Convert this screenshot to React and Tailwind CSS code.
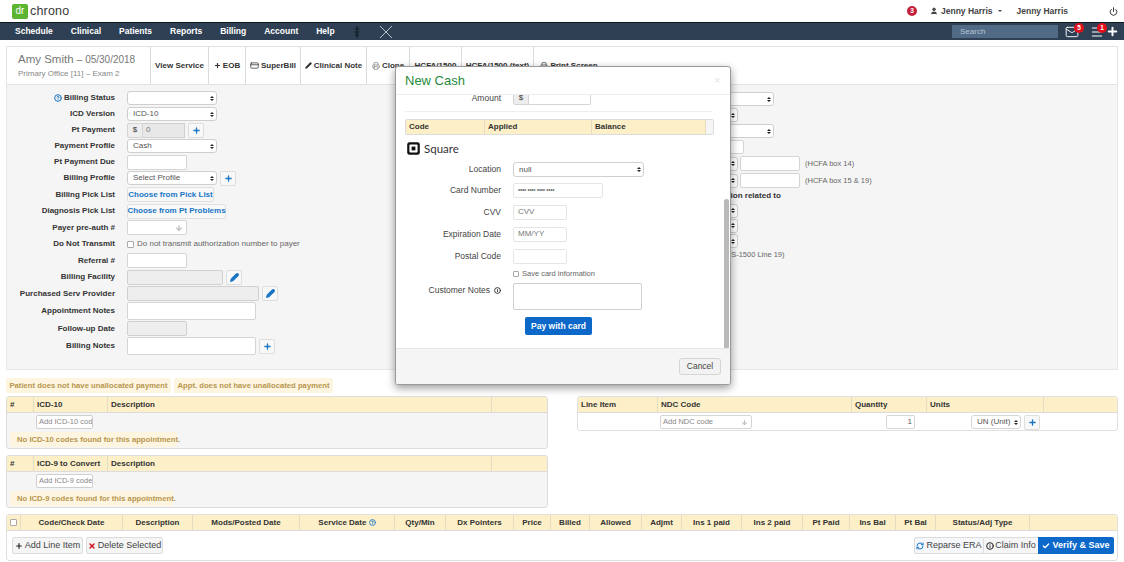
import React from "react";
import { ChevronsUpDown, Plus, Pencil, User, Power, Mail, Menu, CreditCard, Printer, Check, RefreshCw, Info, X, ArrowDown, HelpCircle } from "lucide-react";

const F = { fontFamily: '"Liberation Sans", Arial, sans-serif' };

function Sel({ w, text, h = "h-[14px]" }) {
  return (
    <div className={`${w} ${h} shrink-0 bg-white border border-[#cfcfcf] rounded-[3px] flex items-center justify-between pl-[5px] pr-[2px] text-[8px] text-[#555]`}>
      <span>{text}</span>
      <Arrows />
    </div>
  );
}
function Arrows() {
  return (
    <span className="flex flex-col gap-[1px] items-center shrink-0 w-[5px]">
      <span className="w-0 h-0 border-x-[2px] border-x-transparent border-b-[2.5px] border-b-[#222]" />
      <span className="w-0 h-0 border-x-[2px] border-x-transparent border-t-[2.5px] border-t-[#222]" />
    </span>
  );
}
function Inp({ w, h = "h-[15px]", off, text, cls = "" }) {
  return (
    <div className={`${w} ${h} shrink-0 border rounded-[2px] ${off ? "bg-[#eeeeee] border-[#d0d0d0]" : "bg-white border-[#d5d5d5]"} text-[8px] text-[#777] flex items-center pl-[4px] ${cls}`}>{text}</div>
  );
}
function Blue({ Icon = Plus, fill }) {
  return (
    <div className="w-[16px] h-[15px] shrink-0 ml-[3px] bg-[#f8f8f8] border border-[#dedede] rounded-[2px] flex items-center justify-center text-[#1976c5]">
      <Icon size={9} strokeWidth={3.4} fill={fill ? "currentColor" : "none"} />
    </div>
  );
}
function Row({ label, children, h = "h-[16px]", icon }) {
  return (
    <div className={`flex items-center ${h}`}>
      <div className="w-[108px] pr-0 text-right text-[8px] font-bold text-[#333] whitespace-nowrap flex justify-end items-center gap-[2px] mr-[12px]">
        {icon}
        {label}
      </div>
      {children}
    </div>
  );
}
function Tab({ w, children }) {
  return <div className={`${w} h-full border-r border-[#dcdcdc] flex items-center justify-center gap-[2px] text-[8px] font-bold text-[#333] whitespace-nowrap`}>{children}</div>;
}
function Cell({ w, children, center, noBorder }) {
  return <div className={`${w} h-full flex items-center px-[3px] ${center ? "justify-center" : ""} ${noBorder ? "" : "border-r border-[#e4dcc0]"} text-[8px] font-bold text-[#333] whitespace-nowrap`}>{children}</div>;
}
function Pill({ w, children }) {
  return <div className={`${w} h-[15px] bg-[#fdf5e0] rounded-[2px] flex items-center justify-center text-[7.7px] font-bold text-[#b8954f] whitespace-nowrap`}>{children}</div>;
}
function IcdTable({ title, colW, ph, msg, msgW, h }) {
  return (
    <div className={`w-[542px] ${h} border border-[#dcdcdc] rounded-[3px] bg-[#f5f5f5] overflow-hidden`}>
      <div className="h-[16px] bg-[#fdf0c8] border-b border-[#dcdcdc] flex">
        <Cell w="w-[27px]">#</Cell>
        <Cell w="w-[74px]">{title}</Cell>
        <Cell w="w-[384px]">Description</Cell>
        <Cell w="flex-1" noBorder />
      </div>
      <div className="ml-[29px] mt-[2px] w-[57px] h-[14px] bg-white border border-[#cfcfcf] rounded-[2px] flex items-center pl-[2px] text-[7.5px] text-[#888] whitespace-nowrap overflow-hidden">{ph}</div>
      <div className={`ml-[3px] mt-[3px] ${msgW} h-[15px] bg-[#fdf5e0] rounded-[2px] flex items-center pl-[7px] text-[7.7px] font-bold text-[#b8954f] whitespace-nowrap`}>{msg}</div>
    </div>
  );
}
function MRow({ label, children, h, mt = "mt-0", extra }) {
  return (
    <div className={`flex items-center ${h} ${mt}`}>
      <div className="w-[105px] text-right text-[8.5px] text-[#444] whitespace-nowrap flex justify-end items-center gap-[4px]">{label}{extra}</div>
      <div className="ml-[12px] flex items-center">{children}</div>
    </div>
  );
}

export default function App() {
  return (
    <div style={F} className="relative w-[1124px] h-[562px] bg-white overflow-hidden text-[#333]">
      {/* top bar */}
      <div className="h-[22px] bg-white flex items-center">
        <div className="ml-[12px] w-[16px] h-[15px] bg-[#5cb531] rounded-[2px] flex items-center justify-center text-white text-[10px] leading-none">dr</div>
        <div className="ml-[2px] text-[12.5px] text-[#3a3a3a] tracking-[0.2px]">chrono</div>
        <div className="flex-1" />
        <div className="w-[10px] h-[10px] rounded-full bg-[#c5203a] text-white text-[6.5px] font-bold flex items-center justify-center">3</div>
        <User size={8} fill="#444" className="ml-[13px] text-[#444]" />
        <div className="ml-[3px] text-[8.5px] font-bold text-[#444]">Jenny Harris</div>
        <div className="ml-[5px] w-0 h-0 border-x-[2px] border-x-transparent border-t-[2.5px] border-t-[#444]" />
        <div className="ml-[15px] text-[8.5px] font-bold text-[#444]">Jenny Harris</div>
        <Power size={9} strokeWidth={2.6} className="ml-[41px] mr-[6px] text-[#333]" />
      </div>
      {/* nav */}
      <div className="h-[18px] bg-[#2f4054] border-t border-[#10181f] flex items-center text-white text-[8.5px] font-bold">
        <span className="ml-[15px]">Schedule</span>
        <span className="ml-[18px]">Clinical</span>
        <span className="ml-[18px]">Patients</span>
        <span className="ml-[18px]">Reports</span>
        <span className="ml-[18px]">Billing</span>
        <span className="ml-[18px]">Account</span>
        <span className="ml-[18px]">Help</span>
        <svg width="8" height="14" viewBox="0 0 8 14" className="ml-[18px]" fill="none" stroke="#111c26" strokeWidth="1.2"><path d="M4 1v12M1.5 4h5M1.5 7h5M2 10h4" /></svg>
        <svg width="14" height="14" viewBox="0 0 14 14" className="ml-[18px]" fill="none" stroke="#c9d0d6" strokeWidth="0.9"><path d="M1 1l12 12M13 1L1 13" /></svg>
        <div className="flex-1" />
        <div className="w-[106px] h-[13px] bg-[#516b87] text-[#b9c6d4] font-normal text-[8px] flex items-center pl-[8px]">Search</div>
        <div className="relative ml-[7px] w-[14px] h-[12px]">
          <Mail size={14} strokeWidth={1.6} className="text-white -mt-[1px]" />
          <div className="absolute -top-[3px] left-[9px] w-[10px] h-[10px] rounded-full bg-[#e0101c] text-[6.5px] flex items-center justify-center">5</div>
        </div>
        <div className="relative ml-[11px] w-[12px] h-[12px]">
          <Menu size={14} strokeWidth={1.8} className="text-white -mt-[1px]" />
          <div className="absolute -top-[3px] left-[7px] w-[10px] h-[10px] rounded-full bg-[#e0101c] text-[6.5px] flex items-center justify-center">1</div>
        </div>
        <Plus size={13} strokeWidth={3.6} className="ml-[4px] mr-[5px] text-white" />
      </div>

      {/* header card */}
      <div className="mt-[6px] mx-[6px] h-[39px] bg-white border border-[#e2e2e2] flex">
        <div className="w-[144px] h-full border-r border-[#dcdcdc] pl-[11px] pt-[5px]">
          <div className="text-[11.5px] leading-[14px] text-[#777] whitespace-nowrap">Amy Smith <span className="text-[10px]">– 05/30/2018</span></div>
          <div className="text-[8px] leading-[12px] mt-[1px] text-[#888] whitespace-nowrap">Primary Office [11] – Exam 2</div>
        </div>
        <Tab w="w-[58px]">View Service</Tab>
        <Tab w="w-[37px]"><Plus size={7} strokeWidth={4} />EOB</Tab>
        <Tab w="w-[55px]"><CreditCard size={9} />SuperBill</Tab>
        <Tab w="w-[66px]"><Pencil size={7} fill="#333" />Clinical Note</Tab>
        <Tab w="w-[43px]"><Printer size={8} className="text-[#777]" />Clone</Tab>
        <Tab w="w-[52px]">HCFA/1500</Tab>
        <Tab w="w-[72px]">HCFA/1500 (text)</Tab>
        <div className="w-[70px] h-full flex items-center justify-center gap-[2px] text-[8px] font-bold whitespace-nowrap"><Printer size={8} />Print Screen</div>
      </div>

      {/* billing panel */}
      <div className="mx-[6px] h-[285px] bg-[#f5f5f5] border border-t-0 border-[#e6e6e6] flex">
        <div className="w-[560px] pt-[5px] shrink-0">
          <Row label="Billing Status" icon={<HelpCircle size={8} strokeWidth={3} className="text-[#1976c5]" />}><Sel w="w-[90px]" text="" /></Row>
          <Row label="ICD Version"><Sel w="w-[90px]" text="ICD-10" /></Row>
          <Row label="Pt Payment">
            <div className="w-[16px] h-[15px] bg-[#eee] border border-[#d5d5d5] rounded-l-[2px] text-[8px] flex items-center justify-center">$</div>
            <div className="w-[42px] h-[15px] bg-[#e8e8e8] border border-l-0 border-[#d0d0d0] text-[8px] text-[#777] pl-[3px] flex items-center">0</div>
            <Blue />
          </Row>
          <Row label="Payment Profile"><Sel w="w-[90px]" text="Cash" /></Row>
          <Row label="Pt Payment Due"><Inp w="w-[60px]" /></Row>
          <Row label="Billing Profile"><Sel w="w-[90px]" text="Select Profile" /><Blue /></Row>
          <Row label="Billing Pick List" h="h-[17px]">
            <div className="w-[87px] h-[15px] bg-[#f8f8f8] border border-[#e0e0e0] rounded-[2px] text-[8px] font-bold text-[#1976c5] flex items-center justify-center whitespace-nowrap">Choose from Pick List</div>
          </Row>
          <Row label="Diagnosis Pick List" h="h-[16px]">
            <div className="w-[99px] h-[15px] bg-[#f8f8f8] border border-[#e0e0e0] rounded-[2px] text-[8px] font-bold text-[#1976c5] flex items-center justify-center whitespace-nowrap">Choose from Pt Problems</div>
          </Row>
          <Row label="Payer pre-auth #" h="h-[17px]">
            <div className="w-[60px] h-[15px] bg-white border border-[#d5d5d5] rounded-[2px] flex items-center justify-end pr-[3px] text-[#bbb]"><ArrowDown size={8} strokeWidth={3.5} /></div>
          </Row>
          <Row label="Do Not Transmit">
            <div className="w-[7px] h-[7px] bg-white border border-[#aaa] rounded-[1px] mr-[3px]" />
            <span className="text-[8px] text-[#666] whitespace-nowrap">Do not transmit authorization number to payer</span>
          </Row>
          <Row label="Referral #" h="h-[17px]"><Inp w="w-[60px]" /></Row>
          <Row label="Billing Facility"><Inp w="w-[96px]" off /><Blue Icon={Pencil} fill /></Row>
          <Row label="Purchased Serv Provider" h="h-[17px]"><Inp w="w-[132px]" off /><Blue Icon={Pencil} fill /></Row>
          <Row label="Appointment Notes" h="h-[18px]"><Inp w="w-[129px]" h="h-[18px]" /></Row>
          <Row label="Follow-up Date" h="h-[17px]"><Inp w="w-[60px]" off /></Row>
          <Row label="Billing Notes" h="h-[18px]"><Inp w="w-[129px]" h="h-[18px]" /><Blue /></Row>
        </div>
        <div className="flex-1 pt-[6px] relative">
          <div className="h-[16px] flex items-center"><Sel w="w-[207px]" text="" /></div>
          <div className="h-[16px] flex items-center"><Sel w="w-[171px]" text="" /></div>
          <div className="h-[16px] flex items-center"><Sel w="w-[207px]" text="" /></div>
          <div className="h-[16px] flex items-center"><Inp w="w-[177px]" h="h-[14px]" /></div>
          <div className="h-[17px] flex items-center"><Sel w="w-[171px]" text="" /><Inp w="w-[60px]" cls="ml-[2px]" /><span className="ml-[5px] text-[7.5px] text-[#666] whitespace-nowrap">(HCFA box 14)</span></div>
          <div className="h-[17px] flex items-center"><Sel w="w-[171px]" text="" /><Inp w="w-[60px]" cls="ml-[2px]" /><span className="ml-[5px] text-[7.5px] text-[#666] whitespace-nowrap">(HCFA box 15 &amp; 19)</span></div>
          <div className="h-[14px] flex items-center pl-[103px] text-[8px] font-bold whitespace-nowrap">Patient's Condition related to</div>
          <div className="h-[15px] flex items-center"><Sel w="w-[171px]" text="" /></div>
          <div className="h-[15px] flex items-center"><Sel w="w-[171px]" text="" /></div>
          <div className="h-[16px] flex items-center"><Sel w="w-[171px]" text="" /></div>
          <div className="h-[12px] flex items-center pl-[150px] text-[7.5px] text-[#666] whitespace-nowrap">(CMS-1500 Line 19)</div>
        </div>
      </div>

      {/* alerts */}
      <div className="mt-[8px] ml-[6px] flex gap-[3px]">
        <Pill w="w-[165px]">Patient does not have unallocated payment</Pill>
        <Pill w="w-[159px]">Appt. does not have unallocated payment</Pill>
      </div>

      {/* middle */}
      <div className="mt-[3px] ml-[6px] flex items-start">
        <div className="flex flex-col gap-[6px]">
          <IcdTable title="ICD-10" ph="Add ICD-10 code" msg="No ICD-10 codes found for this appointment." msgW="w-[167px]" h="h-[53px]" />
          <IcdTable title="ICD-9 to Convert" ph="Add ICD-9 code" msg="No ICD-9 codes found for this appointment." msgW="w-[163px]" h="h-[53px]" />
        </div>
        <div className="ml-[29px] w-[541px] h-[35px] border border-[#e0e0e0] rounded-[3px] bg-white overflow-hidden">
          <div className="h-[16px] bg-[#fdf0c8] border-b border-[#dcdcdc] flex">
            <Cell w="w-[80px]">Line Item</Cell>
            <Cell w="w-[194px]">NDC Code</Cell>
            <Cell w="w-[75px]">Quantity</Cell>
            <Cell w="w-[117px]">Units</Cell>
            <Cell w="flex-1" noBorder />
          </div>
          <div className="flex items-center h-[18px]">
            <div className="ml-[82px] w-[92px] h-[14px] border border-[#d5d5d5] rounded-[2px] text-[7.5px] text-[#888] pl-[2px] flex items-center justify-between pr-[3px]">Add NDC code<ArrowDown size={7} strokeWidth={3.5} className="text-[#bbb]" /></div>
            <div className="ml-[134px] w-[29px] h-[14px] border border-[#d5d5d5] rounded-[2px] text-[8px] text-[#555] flex items-center justify-end pr-[2px]">1</div>
            <div className="ml-[56px] w-[50px] h-[14px] border border-[#d5d5d5] rounded-[3px] text-[8px] text-[#555] flex items-center justify-between pl-[5px] pr-[2px]">UN (Unit)<Arrows /></div>
            <Blue />
          </div>
        </div>
      </div>

      {/* bottom table */}
      <div className="mt-[6px] mx-[6px] h-[47px] border border-[#e0e0e0] rounded-[3px] bg-white overflow-hidden">
        <div className="h-[16px] bg-[#fdf0c8] border-b border-[#dcdcdc] flex">
          <Cell w="w-[14px]" center><span className="w-[7px] h-[7px] bg-white border border-[#aaa] rounded-[1px]" /></Cell>
          <Cell w="w-[102px]" center>Code/Check Date</Cell>
          <Cell w="w-[70px]" center>Description</Cell>
          <Cell w="w-[107px]" center>Mods/Posted Date</Cell>
          <Cell w="w-[95px]" center>Service Date&nbsp;<HelpCircle size={7} strokeWidth={3} className="text-[#1976c5]" /></Cell>
          <Cell w="w-[51px]" center>Qty/Min</Cell>
          <Cell w="w-[68px]" center>Dx Pointers</Cell>
          <Cell w="w-[37px]" center>Price</Cell>
          <Cell w="w-[39px]" center>Billed</Cell>
          <Cell w="w-[52px]" center>Allowed</Cell>
          <Cell w="w-[40px]" center>Adjmt</Cell>
          <Cell w="w-[60px]" center>Ins 1 paid</Cell>
          <Cell w="w-[61px]" center>Ins 2 paid</Cell>
          <Cell w="w-[47px]" center>Pt Paid</Cell>
          <Cell w="w-[46px]" center>Ins Bal</Cell>
          <Cell w="w-[40px]" center>Pt Bal</Cell>
          <Cell w="w-[94px]" center>Status/Adj Type</Cell>
          <Cell w="flex-1" noBorder />
        </div>
        <div className="flex items-center h-[30px] pl-[5px] pr-[3px] pb-[1px] text-[9px] text-[#444]">
          <div className="w-[71px] h-[17px] bg-[#f5f5f5] border border-[#dcdcdc] rounded-[2px] flex items-center justify-center gap-[2px] whitespace-nowrap"><Plus size={8} strokeWidth={3.5} className="text-[#222]" />Add Line Item</div>
          <div className="ml-[3px] w-[77px] h-[17px] bg-[#f5f5f5] border border-[#dcdcdc] rounded-[2px] flex items-center justify-center gap-[2px] whitespace-nowrap"><X size={8} strokeWidth={4} className="text-[#d0101c]" />Delete Selected</div>
          <div className="flex-1" />
          <div className="w-[70px] h-[17px] bg-[#f5f7fa] border border-[#dcdcdc] rounded-l-[2px] flex items-center justify-center gap-[2px] whitespace-nowrap"><RefreshCw size={8} strokeWidth={3} className="text-[#1976c5]" />Reparse ERA</div>
          <div className="w-[54px] h-[17px] bg-[#f5f5f5] border-y border-[#dcdcdc] flex items-center justify-center gap-[1px] whitespace-nowrap"><Info size={8} strokeWidth={3} className="text-[#222]" />Claim Info</div>
          <div className="w-[76px] h-[17px] bg-[#0c68c9] rounded-r-[2px] flex items-center justify-center gap-[2px] text-white font-bold whitespace-nowrap"><Check size={8} strokeWidth={4} />Verify &amp; Save</div>
        </div>
      </div>

      {/* modal */}
      <div className="absolute left-[395px] top-[66px] w-[336px] h-[319px] bg-white border border-[#9a9a9a] rounded-[3px] shadow-[0_3px_9px_rgba(0,0,0,0.4)] flex flex-col overflow-hidden">
        <div className="h-[28px] shrink-0 border-b border-[#eee] flex items-center justify-between pl-[9px] pr-[9px]">
          <span className="text-[13px] text-[#1f8a3b]">New Cash</span>
          <X size={7} strokeWidth={2.5} className="text-[#c9c9c9]" />
        </div>
        <div className="flex-1 relative overflow-hidden">
          <div className="absolute right-[1px] top-[104px] w-[5px] h-[150px] rounded-full bg-[#b9b9b9]" />
          <div className="h-[11px] flex items-start overflow-hidden">
            <div className="w-[105px] text-right text-[8.5px] text-[#444] -mt-[3px]">Amount</div>
            <div className="ml-[12px] flex -mt-[5px]">
              <div className="w-[16px] h-[15px] bg-[#eee] border border-[#d5d5d5] rounded-bl-[2px] text-[8px] flex items-center justify-center">$</div>
              <div className="w-[62px] h-[15px] bg-white border border-l-0 border-[#d5d5d5] rounded-br-[2px]" />
            </div>
          </div>
          <div className="ml-[9px] mr-[18px] mt-[5px] border-t border-[#eeeeee]" />
          <div className="ml-[9px] mr-[16px] mt-[7px] h-[16px] bg-[#fdf0c8] border border-[#dcdcdc] rounded-[2px] flex overflow-hidden">
            <Cell w="w-[79px]">Code</Cell>
            <Cell w="w-[107px]">Applied</Cell>
            <Cell w="w-[114px]">Balance</Cell>
            <div className="flex-1 bg-[#f5f5f5]" />
          </div>
          <div className="ml-[11px] mt-[6px] h-[15px] flex items-center gap-[4px]">
            <svg width="13" height="13" viewBox="0 0 13 13"><rect x="0.2" y="0.2" width="12.6" height="12.6" rx="2.2" fill="#111" /><rect x="2.4" y="2.4" width="8.2" height="8.2" rx="1" fill="#fff" /><rect x="4.6" y="4.6" width="3.8" height="3.8" fill="#111" /></svg>
            <span className="text-[11.5px] text-[#333]" style={{ fontFamily: '"Lato", sans-serif' }}>Square</span>
          </div>
          <MRow label="Location" h="h-[17px]" mt="mt-[5px]">
            <Sel w="w-[131px]" text="null" h="h-[15px]" />
          </MRow>
          <MRow label="Card Number" h="h-[16px]" mt="mt-[4px]"><Inp w="w-[90px]" text="•••• •••• •••• ••••" cls="tracking-[-0.3px] !text-[6.5px] border-[#e5e5e5]" /></MRow>
          <MRow label="CVV" h="h-[16px]" mt="mt-[6px]"><Inp w="w-[54px]" text="CVV" cls="border-[#e5e5e5]" /></MRow>
          <MRow label="Expiration Date" h="h-[16px]" mt="mt-[6px]"><Inp w="w-[54px]" text="MM/YY" cls="border-[#e5e5e5]" /></MRow>
          <MRow label="Postal Code" h="h-[16px]" mt="mt-[6px]"><Inp w="w-[54px]" cls="border-[#e5e5e5]" /></MRow>
          <div className="ml-[117px] mt-[4px] h-[12px] flex items-center gap-[3px]">
            <span className="w-[6px] h-[6px] border border-[#aaa] rounded-[1px]" />
            <span className="text-[7.5px] text-[#666]">Save card information</span>
          </div>
          <div className="flex items-start mt-[3px]">
            <div className="w-[105px] h-[14px] text-right text-[8.5px] text-[#444] flex justify-end items-center gap-[4px] whitespace-nowrap">Customer Notes<Info size={7} strokeWidth={3} className="text-[#222]" /></div>
            <div className="ml-[12px] w-[129px] h-[27px] border border-[#cfcfcf] rounded-[2px]" />
          </div>
          <div className="ml-[129px] mt-[7px] w-[67px] h-[18px] bg-[#0c68c9] rounded-[2px] text-white text-[8.5px] font-bold flex items-center justify-center">Pay with card</div>
        </div>
        <div className="h-[36px] shrink-0 bg-[#f5f5f5] border-t border-[#e6e6e6] flex items-center justify-end pr-[9px]">
          <div className="w-[42px] h-[17px] bg-[#f2f2f2] border border-[#d5d5d5] rounded-[3px] text-[8.5px] text-[#444] flex items-center justify-center">Cancel</div>
        </div>
      </div>
    </div>
  );
}
